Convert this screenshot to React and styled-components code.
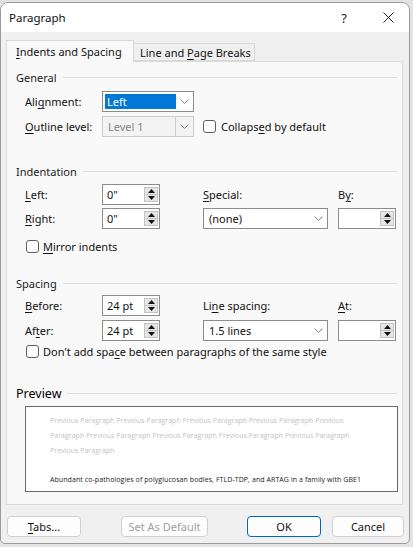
import React from 'react'
import styled, { createGlobalStyle } from 'styled-components'

const Global = createGlobalStyle`
  body {
    margin: 0;
    background: #e3e3e3;
    font-family: "Noto Sans", "Open Sans", sans-serif;
    font-size: 11px;
    color: #111;
  }
  u { text-decoration-thickness: 1px; text-underline-offset: 2px; }
`

const Dialog = styled.div`
  margin-top: 2px;
  width: 410px;
  height: 542px;
  box-sizing: border-box;
  border: 1px solid #9a9a9a;
  border-radius: 8px 8px 5px 5px;
  background: #f0f0f0;
  overflow: hidden;
  display: flex;
  flex-direction: column;
`

const TitleBar = styled.div`
  height: 29px;
  background: #fff;
  display: flex;
  align-items: center;
  padding-left: 8px;
  font-size: 11.5px;
`

const Title = styled.div`
  flex: 1;
`

const TitleBtn = styled.div`
  width: ${p => p.w}px;
  display: flex;
  justify-content: center;
  align-items: center;
  font-size: 13px;
  color: #222;
`

const Body = styled.div`
  padding: 8px 6px 0 5px;
`

const TabBar = styled.div`
  display: flex;
  align-items: flex-end;
  height: 21px;
`

const Tab = styled.div`
  box-sizing: border-box;
  width: ${p => p.w}px;
  height: ${p => (p.active ? 22 : 18)}px;
  margin-bottom: ${p => (p.active ? -1 : 0)}px;
  position: relative;
  z-index: ${p => (p.active ? 1 : 0)};
  border: 1px solid #d9d9d9;
  border-bottom: ${p => (p.active ? 'none' : '1px solid #d9d9d9')};
  border-left: ${p => (p.active ? '1px solid #d9d9d9' : 'none')};
  background: ${p => (p.active ? '#f9f9f9' : '#f0f0f0')};
  padding-left: ${p => (p.active ? 9 : 6)}px;
  display: flex;
  align-items: center;
  font-size: 11px;
  white-space: nowrap;
`

const Panel = styled.div`
  box-sizing: border-box;
  height: 444px;
  border: 1px solid #d9d9d9;
  background: #f9f9f9;
  padding: 0 5px 0 9px;
  display: flex;
  flex-direction: column;
`

const SectionHead = styled.div`
  height: 16px;
  margin-top: ${p => p.mt}px;
  display: flex;
  align-items: center;
  gap: 6px;
  font-size: ${p => (p.big ? 12.5 : 11)}px;
  color: ${p => (p.big ? '#000' : '#1a1a1a')};
  &::after {
    content: "";
    flex: 1;
    height: 1px;
    background: #dedede;
  }
`

const Row = styled.div`
  margin-top: ${p => p.mt}px;
  padding-left: 9px;
  height: 21px;
  display: grid;
  grid-template-columns: 77px 58px 43px 125px 10px 58px;
  align-items: center;
`

const Label = styled.div`
  white-space: nowrap;
  grid-column: ${p => p.col || 'auto'};
`

const SelectBox = styled.div`
  grid-column: ${p => p.col || 'auto'};
  box-sizing: border-box;
  width: ${p => p.w}px;
  height: 21px;
  border: 1px solid ${p => (p.disabled ? '#cccccc' : '#8c8c8c')};
  background: ${p => (p.disabled ? '#f3f3f3' : '#fff')};
  color: ${p => (p.disabled ? '#838383' : '#111')};
  display: flex;
  align-items: stretch;
`

const SelectValue = styled.div`
  flex: 1;
  display: flex;
  align-items: center;
  margin: ${p => (p.highlight ? '2px 0 2px 2px' : '0')};
  background: ${p => (p.highlight ? '#0078d7' : 'transparent')};
  color: ${p => (p.highlight ? '#fff' : 'inherit')};
  border-right: ${p => (p.split ? '1px solid #cccccc' : 'none')};
  padding-left: ${p => (p.highlight ? 2 : 5)}px;
`

const ChevronZone = styled.div`
  width: 17px;
  display: flex;
  align-items: center;
  justify-content: center;
`

const SpinBox = styled.div`
  grid-column: ${p => p.col || 'auto'};
  box-sizing: border-box;
  width: 58px;
  height: 21px;
  border: 1px solid #8c8c8c;
  background: #fff;
  display: flex;
`

const SpinValue = styled.div`
  flex: 1;
  display: flex;
  align-items: center;
  padding-left: 4px;
`

const SpinButtons = styled.div`
  width: 14px;
  margin: 2px 1px 2px 0;
  box-sizing: border-box;
  border: 1px solid #c4c4c4;
  background: #e6e6e6;
  display: flex;
  flex-direction: column;
`

const SpinHalf = styled.div`
  flex: 1;
  display: flex;
  align-items: center;
  justify-content: center;
  border-top: ${p => (p.down ? '1px solid #c4c4c4' : 'none')};
`

const CheckRow = styled.div`
  grid-column: ${p => p.col || 'auto'};
  margin-top: ${p => p.mt || 0}px;
  padding-left: ${p => p.pl || 0}px;
  height: 16px;
  display: flex;
  align-items: center;
  gap: ${p => p.gap || 5}px;
  white-space: nowrap;
`

const Check = styled.div`
  box-sizing: border-box;
  width: 13px;
  height: 13px;
  border: 1px solid #5f5f5f;
  border-radius: 3px;
  background: #fff;
`

const PreviewBox = styled.div`
  margin: 5px 0 0 9px;
  box-sizing: border-box;
  width: 373px;
  height: 86px;
  border: 1px solid #6a6a6a;
  background: #fff;
  padding: 6px 0 0 24px;
  font-family: "Open Sans", "Noto Sans", sans-serif;
  font-size: 7px;
  line-height: 15px;
  white-space: nowrap;
`

const PrevLine = styled.div`
  color: #c2c2c2;
  letter-spacing: 0.03px;
`

const CurLine = styled.div`
  margin-top: 14px;
  color: #1a1a1a;
  letter-spacing: 0.08px;
`

const Footer = styled.div`
  margin-top: 11px;
  padding-left: 6px;
  display: flex;
`

const Button = styled.div`
  box-sizing: border-box;
  width: ${p => p.w}px;
  margin-left: ${p => p.ml || 0}px;
  height: 21px;
  border: 1px solid ${p => (p.primary ? '#0067c0' : '#d0d0d0')};
  border-radius: 4px;
  background: #fdfdfd;
  color: ${p => (p.disabled ? '#a0a0a0' : '#111')};
  display: flex;
  align-items: center;
  justify-content: center;
  white-space: nowrap;
`

const Chevron = () => (
  <svg width="9" height="5" viewBox="0 0 9 5">
    <polyline points="0.5,0.5 4.5,4.5 8.5,0.5" fill="none" stroke="#8a8a8a" strokeWidth="1" />
  </svg>
)

const Tri = ({ down }) => (
  <svg width="7" height="4" viewBox="0 0 7 4">
    <polygon points={down ? '0,0 7,0 3.5,4' : '0,4 7,4 3.5,0'} fill="#111" />
  </svg>
)

const Select = ({ value, w, col, disabled, highlight }) => (
  <SelectBox w={w} col={col} disabled={disabled}>
    <SelectValue highlight={highlight} split={disabled}>{value}</SelectValue>
    <ChevronZone><Chevron /></ChevronZone>
  </SelectBox>
)

const Spin = ({ value, col }) => (
  <SpinBox col={col}>
    <SpinValue>{value}</SpinValue>
    <SpinButtons>
      <SpinHalf><Tri /></SpinHalf>
      <SpinHalf down><Tri down /></SpinHalf>
    </SpinButtons>
  </SpinBox>
)

const prev = [
  'Previous Paragraph Previous Paragraph Previous Paragraph Previous Paragraph Previous',
  'Paragraph Previous Paragraph Previous Paragraph Previous Paragraph Previous Paragraph',
  'Previous Paragraph',
]

export default function App() {
  return (
    <>
      <Global />
      <Dialog>
        <TitleBar>
          <Title>Paragraph</Title>
          <TitleBtn w={46}>?</TitleBtn>
          <TitleBtn w={42}>
            <svg width="11" height="11" viewBox="0 0 11 11">
              <path d="M0.5 0.5 L10.5 10.5 M10.5 0.5 L0.5 10.5" stroke="#222" strokeWidth="1" />
            </svg>
          </TitleBtn>
        </TitleBar>
        <Body>
          <TabBar>
            <Tab active w={128}><span><u>I</u>ndents and Spacing</span></Tab>
            <Tab w={121}><span>Line and <u>P</u>age Breaks</span></Tab>
          </TabBar>
          <Panel>
            <SectionHead mt={7}>General</SectionHead>
            <Row mt={6}>
              <Label>Ali<u>g</u>nment:</Label>
              <Select col="span 2" w={92} value="Left" highlight />
            </Row>
            <Row mt={4}>
              <Label><u>O</u>utline level:</Label>
              <Select col="span 2" w={92} value="Level 1" disabled />
              <CheckRow col="span 3">
                <Check />
                <span>Collaps<u>e</u>d by default</span>
              </CheckRow>
            </Row>

            <SectionHead mt={26}>Indentation</SectionHead>
            <Row mt={5}>
              <Label><u>L</u>eft:</Label>
              <Spin value={'0"'} />
              <Label col="4"><u>S</u>pecial:</Label>
              <Label col="6">B<u>y</u>:</Label>
            </Row>
            <Row mt={3}>
              <Label><u>R</u>ight:</Label>
              <Spin value={'0"'} />
              <Select col="4" w={125} value="(none)" />
              <Spin col="6" value="" />
            </Row>
            <CheckRow mt={9} pl={10} gap={4}>
              <Check />
              <span><u>M</u>irror indents</span>
            </CheckRow>

            <SectionHead mt={21}>Spacing</SectionHead>
            <Row mt={4}>
              <Label><u>B</u>efore:</Label>
              <Spin value="24 pt" />
              <Label col="4">Li<u>n</u>e spacing:</Label>
              <Label col="6"><u>A</u>t:</Label>
            </Row>
            <Row mt={4}>
              <Label>Af<u>t</u>er:</Label>
              <Spin value="24 pt" />
              <Select col="4" w={125} value="1.5 lines" />
              <Spin col="6" value="" />
            </Row>
            <CheckRow mt={2} pl={10} gap={4}>
              <Check />
              <span>Don't add spa<u>c</u>e between paragraphs of the same style</span>
            </CheckRow>

            <SectionHead mt={26} big>Preview</SectionHead>
            <PreviewBox>
              {prev.map((l, i) => <PrevLine key={i}>{l}</PrevLine>)}
              <CurLine>Abundant co-pathologies of polyglucosan bodies, FTLD-TDP, and ARTAG in a family with GBE1</CurLine>
            </PreviewBox>
          </Panel>
        </Body>
        <Footer>
          <Button w={74}><span><u>T</u>abs...</span></Button>
          <Button w={87} ml={40} disabled>Set As Default</Button>
          <Button w={74} ml={39} primary>OK</Button>
          <Button w={72} ml={11}>Cancel</Button>
        </Footer>
      </Dialog>
    </>
  )
}
